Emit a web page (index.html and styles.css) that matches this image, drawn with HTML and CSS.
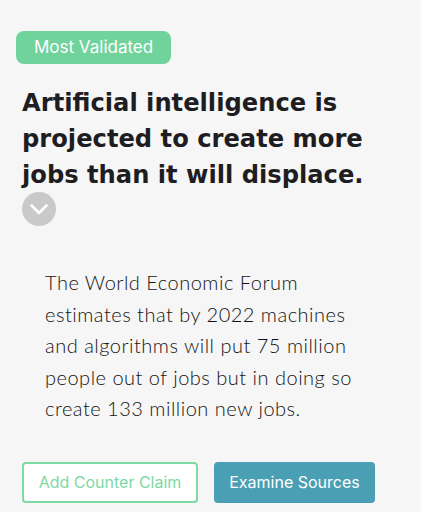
FILE: index.html
```html
<!DOCTYPE html>
<html>
<head>
<meta charset="utf-8">
<link rel="stylesheet" href="styles.css">
</head>
<body>
<div class="card">
  <span class="badge">Most Validated</span>
  <h1 class="claim">Artificial intelligence is projected to create more jobs than it will displace.</h1>
  <div class="toggle">
    <svg width="34" height="34" viewBox="0 0 34 34"><circle cx="17" cy="17" r="17" fill="#c9c9c9"/><path d="M9.5 13.5 L17 21 L24.5 13.5" fill="none" stroke="#fff" stroke-width="2.6" stroke-linecap="round" stroke-linejoin="round"/></svg>
  </div>
  <p class="detail">The World Economic Forum estimates that by 2022 machines and algorithms will put 75 million people out of jobs but in doing so create 133 million new jobs.</p>
  <div class="actions">
    <button class="btn btn-outline">Add Counter Claim</button>
    <button class="btn btn-solid">Examine Sources</button>
  </div>
</div>
</body>
</html>
```
FILE: styles.css
```css
html, body {
  margin: 0;
  padding: 0;
  background: #f6f6f6;
}
.card {
  width: 421px;
  height: 512px;
  box-sizing: border-box;
  padding: 31px 0 0 22px;
  font-family: Lato, "Open Sans", sans-serif;
}
.badge {
  display: inline-block;
  margin-left: -6px;
  background: #6fd39b;
  color: #fff;
  font-family: Inter, sans-serif;
  font-size: 17px;
  line-height: 33px;
  padding: 0 18px;
  border-radius: 8px;
}
.claim {
  margin: 21px 0 0 0;
  width: 360px;
  font-family: "DejaVu Sans", sans-serif;
  font-size: 24.2px;
  line-height: 36px;
  font-weight: 700;
  color: #1e1e22;
}
.toggle {
  display: flex;
  margin-top: -1px;
  height: 34px;
}
.detail {
  margin: 41px 0 0 23px;
  width: 320px;
  font-size: 20px;
  letter-spacing: 0.5px;
  line-height: 31.5px;
  font-weight: 300;
  color: #141414;
}
.actions {
  display: flex;
  gap: 16px;
  margin-top: 37px;
}
.btn {
  height: 41px;
  font-family: Inter, sans-serif;
  font-size: 16px;
  border-radius: 4px;
  padding: 0;
  white-space: nowrap;
  box-sizing: border-box;
}
.btn-outline {
  width: 176px;
  background: #fff;
  border: 2px solid #7ed9a5;
  color: #7ed9a5;
}
.btn-solid {
  width: 161px;
  background: #4a9fb5;
  border: none;
  color: #fff;
}
```
